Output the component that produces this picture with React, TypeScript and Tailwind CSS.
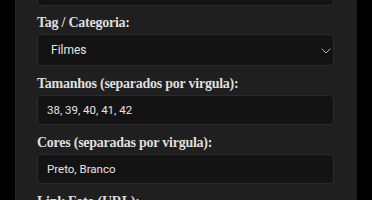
import { ChevronDown } from "lucide-react";

const labelCls =
  "block text-[14px] font-bold leading-[18px] tracking-[-0.25px] text-[#dedede] mb-[2px] font-['Liberation_Serif','DejaVu_Serif',serif]";
const inputCls =
  "w-full h-[30px] rounded-[4px] border border-[#2b2b2b] bg-[#131313] px-[9px] text-[11.5px] text-[#e4e4e4] outline-none font-['Roboto','Liberation_Sans',sans-serif]";

export default function App() {
  return (
    <div className="w-[372px] h-[200px] overflow-hidden bg-black">
      <div className="ml-[15px] w-[342px] h-full bg-[#1f1f1f] border-l border-[#262626] pl-[21px] pr-[23px]">
        <div className="h-[6px] overflow-hidden flex flex-col justify-end">
          <div className="h-[31px] shrink-0 rounded-[4px] border border-[#2b2b2b] bg-[#131313]" />
        </div>
        <div className="pt-[8px]">
          <label className={labelCls}>Tag / Categoria:</label>
          <div className="relative">
            <select
              className={`${inputCls} h-[32px] appearance-none pl-[13px] text-[12px]`}
              defaultValue="Filmes"
            >
              <option>Filmes</option>
            </select>
            <ChevronDown
              size={16}
              strokeWidth={1.4}
              className="pointer-events-none absolute right-0 top-[9px] text-[#c4c4c4]"
            />
          </div>
        </div>
        <div className="pt-[9px]">
          <label className={labelCls}>Tamanhos (separados por virgula):</label>
          <input className={inputCls} defaultValue="38, 39, 40, 41, 42" />
        </div>
        <div className="pt-[9px]">
          <label className={labelCls}>Cores (separadas por virgula):</label>
          <input className={inputCls} defaultValue="Preto, Branco" />
        </div>
        <div className="pt-[9px]">
          <label className={labelCls}>Link Foto (URL):</label>
        </div>
      </div>
    </div>
  );
}
